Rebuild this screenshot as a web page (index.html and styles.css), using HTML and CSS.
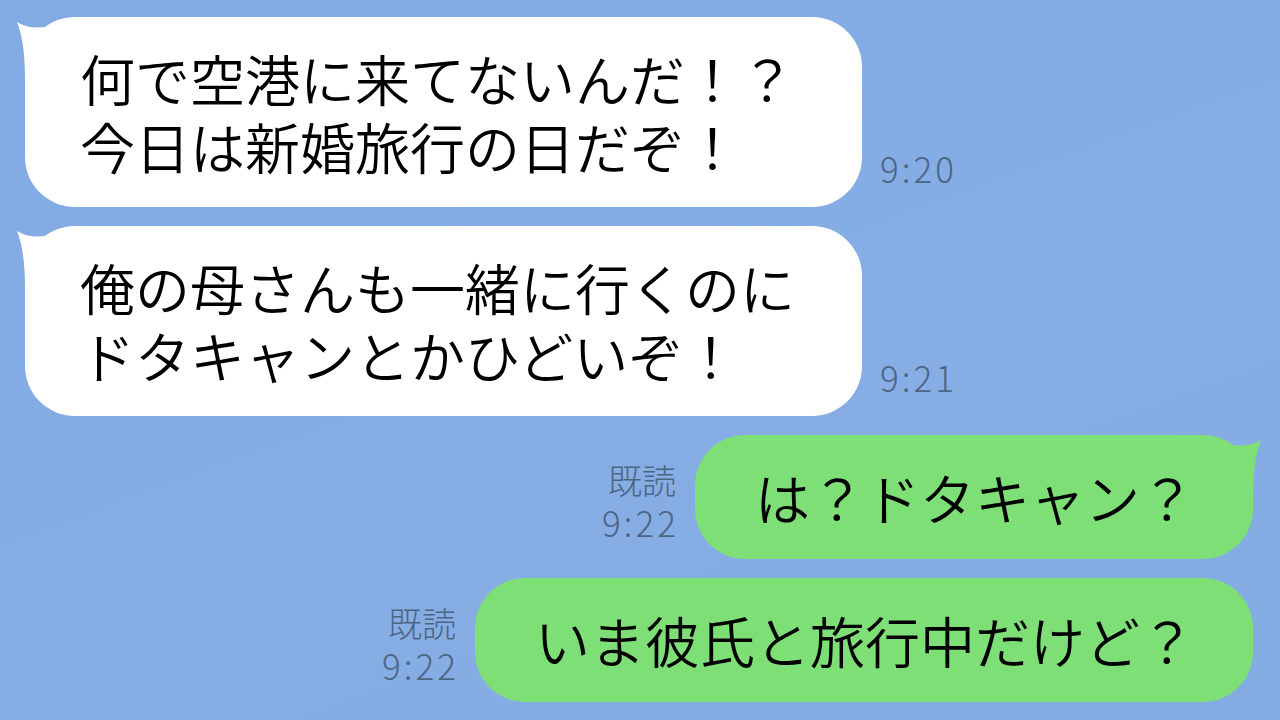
FILE: index.html
```html
<!DOCTYPE html>
<html lang="ja">
<head>
  <meta charset="UTF-8">
  <meta name="viewport" content="width=device-width, initial-scale=1.0">
  <title>トーク</title>
  <link rel="stylesheet" href="styles.css">
</head>
<body>
  <div class="chat">

    <!-- 相手のメッセージ -->
    <div class="row left">
      <div class="bubble white">
        <svg class="tail" viewBox="0 0 70 70" width="70" height="70"><path d="M4 5 C20 15 42 10 62 0 L62 62 L12 62 C12 40 10 20 4 5 Z"/></svg>
        <p>何で空港に来てないんだ！？<br>今日は新婚旅行の日だぞ！</p>
      </div>
      <div class="meta"><span class="time">9:20</span></div>
    </div>

    <div class="row left">
      <div class="bubble white">
        <svg class="tail" viewBox="0 0 70 70" width="70" height="70"><path d="M4 5 C20 15 42 10 62 0 L62 62 L12 62 C12 40 10 20 4 5 Z"/></svg>
        <p>俺の母さんも一緒に行くのに<br>ドタキャンとかひどいぞ！</p>
      </div>
      <div class="meta"><span class="time">9:21</span></div>
    </div>

    <!-- 自分のメッセージ -->
    <div class="row right">
      <div class="meta"><span>既読</span><span class="time">9:22</span></div>
      <div class="bubble green">
        <svg class="tail" viewBox="0 0 70 70" width="70" height="70"><path d="M66 5 C50 15 28 10 8 0 L8 62 L58 62 C58 40 60 20 66 5 Z"/></svg>
        <p>は？ドタキャン？</p>
      </div>
    </div>

    <div class="row right">
      <div class="meta"><span>既読</span><span class="time">9:22</span></div>
      <div class="bubble green">
        <p>いま彼氏と旅行中だけど？</p>
      </div>
    </div>

  </div>
</body>
</html>
```

FILE: styles.css
```css
body {
  margin: 0;
  width: 1280px;
  height: 720px;
  overflow: hidden;
  background: linear-gradient(160deg, #82aae3 0%, #86aee5 55%, #84ace3 100%);
  font-family: "Noto Sans CJK JP", "Noto Sans", sans-serif;
}

.chat {
  display: flex;
  flex-direction: column;
  gap: 19px;
  padding: 17px 27px 0 25px;
}

.row {
  display: flex;
  align-items: flex-end;
  gap: 18px;
}

.row.right {
  justify-content: flex-end;
  gap: 19px;
}

.bubble {
  position: relative;
  border-radius: 50px;
  color: #000;
}

.bubble p {
  position: relative;
  margin: 0;
  font-size: 55px;
  line-height: 68px;
  font-weight: 350;
  white-space: nowrap;
}

.white {
  background: #fff;
  padding: 26px 67px 28px 55px;
}

.green {
  background: #7ddf76;
  padding: 27px 58px 29px 60px;
}

/* しっぽ */
.tail {
  position: absolute;
  top: 0;
}

.white .tail {
  left: -12px;
  fill: #fff;
}

.green .tail {
  right: -12px;
  fill: #7ddf76;
}

.meta {
  display: flex;
  flex-direction: column;
  align-items: flex-end;
  margin-bottom: 16px;
  color: #4d6584;
  font-weight: 300;
  font-size: 34px;
  line-height: 42px;
}

.time {
  font-size: 35px;
  letter-spacing: 3px;
  margin-right: -3px;
}

.left .meta {
  margin-bottom: 18px;
}
```
